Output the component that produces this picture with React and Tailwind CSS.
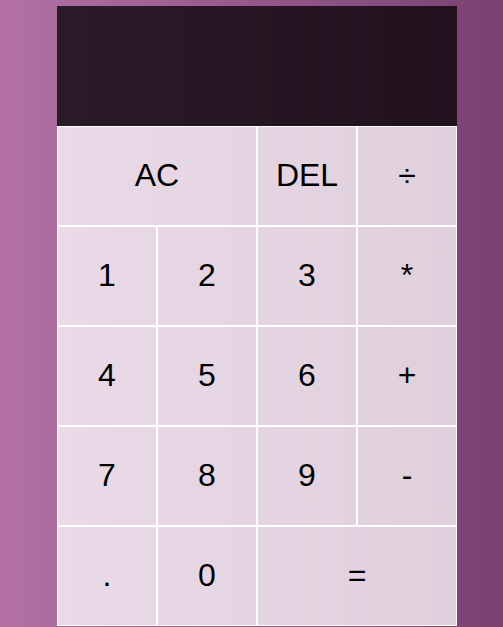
import React from "react";

const Btn = ({ children, className = "" }) => (
  <button
    className={`border border-white bg-white/75 pb-[3px] text-[32px] leading-none text-black cursor-pointer ${className}`}
    style={{ fontFamily: '"Liberation Sans", Arial, sans-serif' }}
  >
    {children}
  </button>
);

export default function App() {
  return (
    <div className="min-h-[627px] w-full bg-gradient-to-r from-[#b371a5] to-[#7a4071] pl-[57px] pt-[6px]">
      <div className="grid grid-cols-[repeat(4,100px)] grid-rows-[120px_repeat(5,100px)]">
        <div className="col-span-4 bg-black/75 flex flex-col items-end justify-around p-[10px] break-all"></div>
        <Btn className="col-span-2">AC</Btn>
        <Btn>DEL</Btn>
        <Btn>÷</Btn>
        <Btn>1</Btn>
        <Btn>2</Btn>
        <Btn>3</Btn>
        <Btn>*</Btn>
        <Btn>4</Btn>
        <Btn>5</Btn>
        <Btn>6</Btn>
        <Btn>+</Btn>
        <Btn>7</Btn>
        <Btn>8</Btn>
        <Btn>9</Btn>
        <Btn>-</Btn>
        <Btn>.</Btn>
        <Btn>0</Btn>
        <Btn className="col-span-2">=</Btn>
      </div>
    </div>
  );
}
